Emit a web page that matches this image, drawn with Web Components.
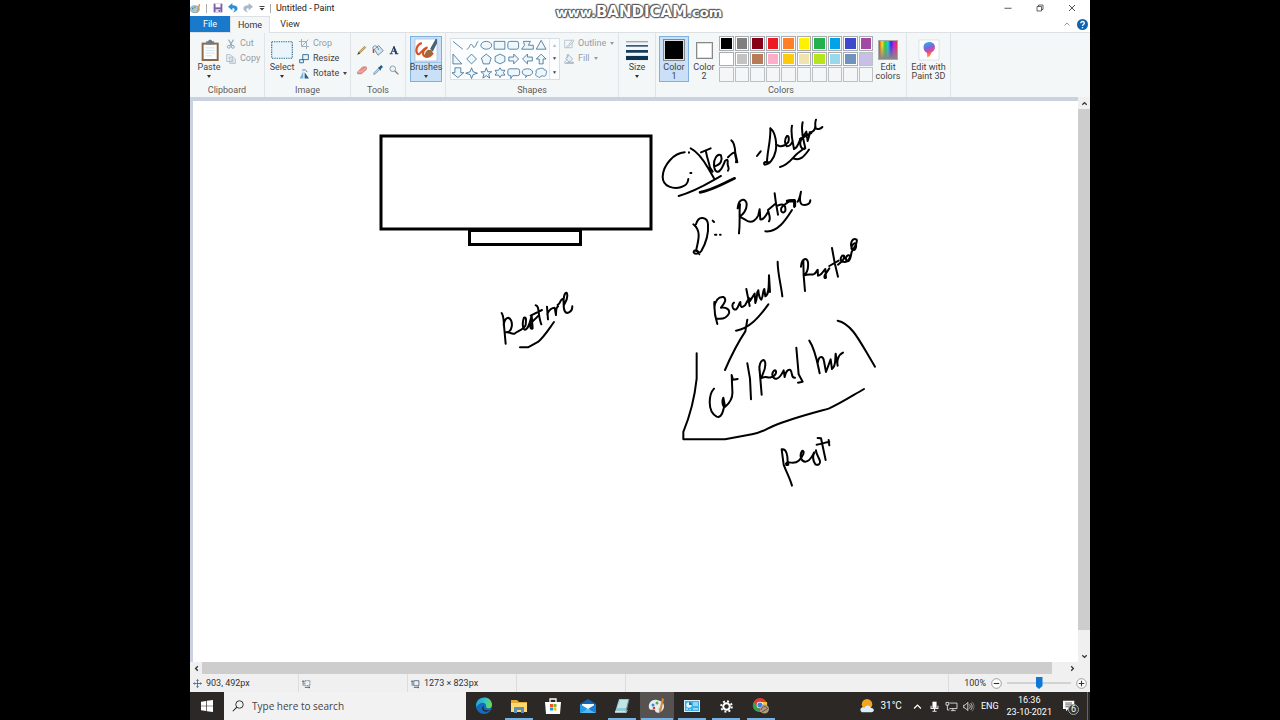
<!DOCTYPE html>
<html lang="en">
<head>
<meta charset="utf-8">
<title>Untitled - Paint</title>
<style>
  body {
    margin: 0;
    background: #000;
    font-family: Roboto, "Open Sans", sans-serif;
    font-size: 9px;
    color: #333;
  }
</style>
</head>
<body>
<desktop-screen>
  <title-bar>Untitled - Paint</title-bar>
  <ribbon-tabs></ribbon-tabs>
  <ribbon-bar></ribbon-bar>
  <work-area></work-area>
  <status-bar></status-bar>
  <task-bar></task-bar>
</desktop-screen>

<script>
const icons = {
  paint: `<ellipse cx="7" cy="9" rx="6.5" ry="5" fill="#a9cbdc" stroke="#6d94a8"/><circle cx="4" cy="8" r="1.3" fill="#3f8fd0"/><circle cx="7" cy="6.5" r="1.2" fill="#4cae4f"/><circle cx="5" cy="11" r="1.2" fill="#e0b53a"/><path d="M9 14L13 1l2 1-4 12z" fill="#d8964c"/>`,
  save: `<path d="M1 1h14v14H1z" fill="#7a5fa8"/><path d="M4 1h8v6H4z" fill="#fff"/><path d="M4 10h8v5H4z" fill="#e6e0f0"/><path d="M9 11h2v3H9z" fill="#5c4590"/>`,
  undo: `<path d="M7 0L0 6l7 6V8.500c4-.5 5 3 1 6.500 10-2 10-12-1-11.500z" fill="#2f8fd6"/>`,
  redo: `<path d="M9 0l7 6-7 6V8.500c-4-.5-5 3-1 6.500C-2 13-2 3 9 3.500z" fill="#a9b9c9"/>`,
  custom: `<path d="M3 4h10v1.800H3zM3 8h10l-5 5z" fill="#444"/>`,
  min: `<path d="M1 8.500h14" stroke="#333" stroke-width="1.600"/>`,
  restore: `<path d="M2 5h9v9H2zM5 5V2h9v9h-3" fill="none" stroke="#333" stroke-width="1.500"/>`,
  close: `<path d="M2 2l12 12M14 2L2 14" stroke="#333" stroke-width="1.700"/>`,
  up: `<path d="M3 11l5-5 5 5" fill="none" stroke="currentColor" stroke-width="1.800"/>`,
  scrollup: `<path d="M3 11l5-5 5 5" fill="none" stroke="currentColor" stroke-width="3"/>`,
  down: `<path d="M3 5l5 5 5-5" fill="none" stroke="currentColor" stroke-width="3"/>`,
  left: `<path d="M11 3L6 8l5 5" fill="none" stroke="currentColor" stroke-width="3"/>`,
  right: `<path d="M5 3l5 5-5 5" fill="none" stroke="currentColor" stroke-width="3"/>`,
  help: `<circle cx="8" cy="8" r="8" fill="#0f63b0"/><path d="M5.500 6.200C5.500 2.500 11 3 10.600 6.300 10.300 8 8 8 8 10.200M8 11.500v2" fill="none" stroke="#fff" stroke-width="1.900"/>`,
  paste: `<path d="M2 2h13v14H2z" fill="#8c6847"/><path d="M3.500 3.500h10v11h-10z" fill="#fbfdff"/><path d="M5 6h7M5 8h7M5 10h7M5 12h5" stroke="#cfdbe4" stroke-width=".6"/><path d="M5.500 1H7C7.500-.5 9.500-.5 10 1h1.500v2.500h-6z" fill="#737c83"/>`,
  cut: `<path d="M4 1l6 10M12 1L6 11" stroke="#91a6ba" stroke-width="1.700"/><circle cx="4.500" cy="12.500" r="2.300" fill="none" stroke="#91a6ba" stroke-width="1.600"/><circle cx="11" cy="12.500" r="2.300" fill="none" stroke="#91a6ba" stroke-width="1.600"/>`,
  copy: `<path d="M1 1h6l3 3v8H1zM6 5h6l3 3v7H6z" fill="#eef3f7" stroke="#a3b2c4" stroke-width="1.200"/><path d="M8 9h5M8 11h5M8 13h5M3 5h3M3 7h3" stroke="#b6c2d0"/>`,
  select: `<rect x=".5" y="2" width="15" height="12" fill="#e9f5fa" stroke="#2d6a90" stroke-width=".8" stroke-dasharray="1 .7"/>`,
  crop: `<path d="M4 0v12h12M0 4h12v12M5 11L15 1" fill="none" stroke="#9fb1c1" stroke-width="1.600"/>`,
  resize: `<path d="M6 1h9v8H6zM1 9h6v5H1z" fill="#eaf5fb" stroke="#26618a" stroke-width="1.400"/>`,
  rotate: `<path d="M7 3v12H1z" fill="#7ab4dc"/><path d="M9 5l7 10H9z" fill="#1e5f92"/><path d="M5 2c4-2 7 0 8 3" fill="none" stroke="#356f98" stroke-width="1.300"/>`,
  pencil: `<path d="M1 15l2-4L12 2l2 2-9 9z" fill="#e4b558" stroke="#86683b"/><path d="M1 15l2-4 2 2z" fill="#333"/>`,
  bucket: `<path d="M3 7l6-5 6 7-7 6z" fill="#d5e7f2" stroke="#52748c"/><path d="M1 6c0-5 6-5 8 2" fill="none" stroke="#42708f"/><path d="M1 6c2 0 2 2 2 6H1z" fill="#d13c2c"/>`,
  text: `<path d="M1 14h5M9.500 14H15M3 14L8 2l5 12M5 10h6" fill="none" stroke="#1e3a5c" stroke-width="1.500"/><path d="M8 2l5 12h-3L7 5z" fill="#1e3a5c"/>`,
  eraser: `<path d="M1 11L9 3h6v4l-8 7H1z" fill="#e88d88" stroke="#bd605d"/><path d="M1 11h6l8-7" fill="none" stroke="#fbd3cf"/>`,
  picker: `<path d="M1 15l1-3 7-7 2 2-7 7z" fill="#bcd9ea" stroke="#4d7691"/><path d="M8 4l2-1 3-3 3 3-3 3-1 3z" fill="#245c8a"/>`,
  zoom: `<circle cx="6" cy="6" r="4.500" fill="#eaf4fa" stroke="#87919a" stroke-width="1.400"/><path d="M9.500 9.500L15 15" stroke="#8d765f" stroke-width="2"/>`,
  brush: `<path d="M0 0h16v16H0z" fill="#fff" stroke="#a9bccb" stroke-width=".5"/><path d="M5 3C1 4 0 9 2 11c2 1 3-4 7-5-4 3-4 6-1 7 2 0 4-1 5-3" fill="none" stroke="#dc4d22" stroke-width="1.500"/><path d="M11 7l4-7h1v3l-3 6z" fill="#46637a"/><path d="M7 13c0-4 2-6 5-5 2 2 0 5-5 5z" fill="#9a6b39"/>`,
  outline: `<path d="M1 2h12v12H1z" fill="none" stroke="#b1bdcb" stroke-width="1.300"/><path d="M4 13L14 1l2 2L6 14z" fill="#eef2f6" stroke="#98a8b8"/>`,
  fill: `<path d="M3 7l5-5 6 6-6 5z" fill="#e8eff5" stroke="#98a8b8" stroke-width="1.200"/><path d="M5 7V1h3M1 15c0-5 3-3 3-7M6 13h9v2H2z" fill="#bac6d6" stroke="#98a8b8"/>`,
  size: `<path d="M0 2h16" stroke="#8797a6" stroke-width=".8"/><path d="M0 5h16" stroke="#35556f" stroke-width="1.200"/><path d="M0 9h16" stroke="#173c59" stroke-width="2"/><path d="M0 13.800h16" stroke="#0d3353" stroke-width="3"/>`,
  paint3d: `<defs><linearGradient id="g" x2=".3" y2="1"><stop stop-color="#20bdf0"/><stop offset=".45" stop-color="#7967d8"/><stop offset=".7" stop-color="#e9449a"/><stop offset="1" stop-color="#f79b28"/></linearGradient></defs><path d="M0 0h16v16H0z" fill="#fff" stroke="#c3cbd1" stroke-width=".4"/><path d="M8 1.500c-6 0-5 7-2 8.500 1.200 1 0 3 1 4 1-1 2-1 3-4 4-2 4-8.500-2-8.500z" fill="url(#g)"/>`,
  move: `<path d="M8 1v14M1 8h14M6 3l2-2 2 2M6 13l2 2 2-2M3 6L1 8l2 2M13 6l2 2-2 2" fill="none" stroke="#31506a" stroke-width="1.300"/>`,
  selsize: `<path d="M2 12V3M.500 5L2 3l1.500 2M5 15h9M12 13.500l2 1.500-2 1" fill="none" stroke="#31506a" stroke-width="1.300"/><path d="M5 3h9v9H5z" fill="none" stroke="#31506a" stroke-width="1.300" stroke-dasharray="2 1"/>`,
  imgsize: `<path d="M2 12V3M.500 5L2 3l1.500 2M5 15h9M12 13.500l2 1.500-2 1M5 3h9v9H5z" fill="none" stroke="#31506a" stroke-width="1.300"/>`,
  minus: `<circle cx="8" cy="8" r="7" fill="#fff" stroke="#777"/><path d="M4 8h8" stroke="#333" stroke-width="1.600"/>`,
  plus: `<circle cx="8" cy="8" r="7" fill="#fff" stroke="#777"/><path d="M4 8h8M8 4v8" stroke="#333" stroke-width="1.600"/>`,
  windows: `<path d="M0 2.200L6.800 1.200v6.300H0zM7.700 1.100L16 0v7.500H7.700zM0 8.400h6.800v6.400L0 13.800zM7.700 8.400H16V16l-8.300-1.100z" fill="#fff"/>`,
  search: `<circle cx="10" cy="6" r="5" fill="none" stroke="#222" stroke-width="1.200"/><path d="M6.500 9.500L1 15" stroke="#222" stroke-width="1.400"/>`,
  edge: `<defs><linearGradient id="e" x2="1" y2=".3"><stop stop-color="#2095df"/><stop offset=".6" stop-color="#36c5c5"/><stop offset="1" stop-color="#66d85a"/></linearGradient></defs><circle cx="8" cy="8" r="8" fill="#126bbd"/><path d="M0 8C0-3 16-3 16 7c0 4-5 4-6 2 1-4-4-6-8-2-1 1-2 3-2 1z" fill="url(#e)"/><path d="M8 8c-2 3 1 5 6 4-3 3-8 2-8-2 0-1 1-2 2-2z" fill="#2d2a27"/>`,
  folder: `<path d="M0 2h6l2 2h8v10H0z" fill="#e5aa35"/><path d="M0 5h16v9H0z" fill="#ffd86e"/><path d="M3 15V9h10v6h-3v-3H6v3z" fill="#5793bd"/>`,
  store: `<path d="M5 4V1h6v3" fill="none" stroke="#fff" stroke-width="1.300"/><path d="M0 4h16l-1 12H1z" fill="#fff"/><path d="M5 6h3v3H5z" fill="#f15325"/><path d="M8.500 6h3v3h-3z" fill="#78b81c"/><path d="M5 9.500h3v3H5z" fill="#159fe6"/><path d="M8.500 9.500h3v3h-3z" fill="#f8ba12"/>`,
  mail: `<path d="M0 6l8-5 8 5v9H0z" fill="#1164b5"/><path d="M2 6h12v6H2z" fill="#f5fbff"/><path d="M0 6l8 5-8 4z" fill="#279bea"/><path d="M16 6l-8 5 8 4z" fill="#1b80d3"/><path d="M0 15l8-4 8 4z" fill="#51b9f4"/>`,
  notepad: `<path d="M5 1h10l-3 13H1z" fill="#8acbd6"/><path d="M6 2h8l-2 8H3z" fill="#c2e4e8"/><path d="M1 14h11l1-2" stroke="#e8eced" stroke-width="1.500" fill="none"/><path d="M12 14L15 1" stroke="#6b8e96"/>`,
  palette: `<path d="M8 2C2 1-1 6 0 10c2 4 4 0 6 2 0 5 9 3 9-4 0-3-2-5-7-6z" fill="#e4edf2"/><circle cx="4" cy="7" r="1.500" fill="#3889d2"/><circle cx="8" cy="5" r="1.500" fill="#5aab48"/><circle cx="5" cy="10" r="1.300" fill="#d93e32"/><circle cx="11" cy="11" r="1.500" fill="#e2ba3a"/><path d="M10 14l3-14 2 1-3 13z" fill="#d78838"/>`,
  control: `<path d="M0 2h16v12H0z" fill="#d9eef9"/><path d="M1 3h14v10H1z" fill="#42afe4"/><circle cx="5" cy="7" r="2.700" fill="#e5f6fd"/><path d="M5 7V4a3 3 0 013 3z" fill="#1878b5"/><path d="M9 5h5M9 7h5M3 12v-2M6 12v-1M9 11h5" stroke="#eafaff"/>`,
  gear: `<circle cx="8" cy="8" r="4" fill="none" stroke="#fff" stroke-width="2.500"/><circle cx="8" cy="8" r="6.500" fill="none" stroke="#fff" stroke-width="2.400" stroke-dasharray="2.400 2.700"/>`,
  chrome: `<circle cx="7" cy="7" r="7" fill="#e33b2e"/><path d="M1 4l4 5 2 5C1 14-2 8 1 4z" fill="#31a350"/><path d="M8 4h6c1 5-3 9-7 10l3-6z" fill="#f5c731"/><circle cx="7" cy="7" r="3.300" fill="#fff"/><circle cx="7" cy="7" r="2.600" fill="#3d7ee4"/><circle cx="11.500" cy="11" r="4.500" fill="#b19b80"/><path d="M8 12c2-5 5-4 7-1M9 14l5-3" stroke="#66503e" fill="none"/>`,
  weather: `<circle cx="8" cy="6" r="6" fill="#f5a51d"/><path d="M2 15c-4-4 1-7 3-5 2-4 7-3 7 0 5 0 5 5 1 5z" fill="#d9edfb"/>`,
  mic: `<path d="M5 1h6v9H5z" fill="#fff"/><path d="M3 7v4h10V7M8 11v4M5 15h6" fill="none" stroke="#eee" stroke-width="1.500"/>`,
  network: `<path d="M5 3h11v8H5M10 11v3M7 14h7" fill="none" stroke="#eee" stroke-width="1.200"/><path d="M0 2h4v4H0zM2 6v7h3" fill="none" stroke="#eee" stroke-width="1.200"/>`,
  sound: `<path d="M1 6h2l4-4v12l-4-4H1z" fill="none" stroke="#eee" stroke-width="1.200"/><path d="M9 5c2 2 2 4 0 6M11 3c3 3 3 7 0 10" fill="none" stroke="#eee" stroke-width="1.200"/><path d="M13 1c4 4 4 10 0 14" fill="none" stroke="#999"/>`,
  chat: `<path d="M0 1h15v11H7l-3 3v-3H0z" fill="#fff"/><path d="M3 4h9M3 6.500h9M3 9h6" stroke="#333"/>`
};

// draws one of the icons above, sized with --size
class PaintIcon extends HTMLElement {
  constructor() {
    super();
    this.attachShadow({ mode: "open" });
  }

  connectedCallback() {
    this.shadowRoot.innerHTML = `
      <style>
        :host { display: inline-block; flex: none; width: var(--size, 10px); height: var(--size, 10px); }
        svg { display: block; width: 100%; height: 100%; overflow: visible; }
      </style>
      <svg viewBox="0 0 16 16" aria-hidden="true">${icons[this.getAttribute("name")]}</svg>`;
  }
}

function define(name, html) {
  const template = document.createElement("template");
  template.innerHTML = html;
  window.customElements.define(name, class extends HTMLElement {
    constructor() {
      super();
      this.attachShadow({ mode: "open" });
      this.shadowRoot.appendChild(template.content.cloneNode(true));
    }
  });
}

const reset = `
  * { box-sizing: border-box; }
  button { font: inherit; color: inherit; border: none; background: none; padding: 0; margin: 0; }
`;

window.customElements.define("paint-icon", PaintIcon);

define("desktop-screen", `
  <style>
    :host { display: flex; flex-direction: column; position: relative; width: min(100vw, 125vh); height: 100vh; margin: 0 auto; background: #fff; overflow: hidden; }
    .watermark { position: absolute; top: 2px; left: 0; right: 2px; text-align: center; font: bold 15px/20px "DejaVu Sans", sans-serif; color: #fff; pointer-events: none;
      text-shadow: 1px 0 1px #555, -1px 0 1px #555, 0 1px 1px #555, 0 -1px 1px #555, 1px 1px 1px #777, -1px -1px 1px #777; }
    .small { font-size: 13px; }
  </style>
  <slot></slot>
  <div class="watermark"><span class="small">www.</span>BANDICAM<span class="small">.com</span></div>
`);

define("title-bar", `
  <style>
    ${reset}
    :host { display: flex; align-items: center; height: 16px; flex: none; color: #222; background: #fff; }
    .quick { display: flex; align-items: center; gap: 5px; padding-right: 4px; }
    .quick button { display: flex; }
    .line { width: 1px; height: 9px; background: #aaa; margin-right: 1px; }
    h1 { flex: 1; margin: 0 0 0 4px; font-size: 9px; line-height: 16px; font-weight: normal; }
    .controls { display: flex; padding-right: 2px; }
    .controls button { display: grid; place-items: center; width: 32px; height: 14px; --size: 8px; }
  </style>
  <div class="quick">
    <paint-icon name="paint" style="--size: 11px"></paint-icon><span class="line"></span>
    <button aria-label="Save"><paint-icon name="save"></paint-icon></button>
    <button aria-label="Undo"><paint-icon name="undo"></paint-icon></button>
    <button aria-label="Redo"><paint-icon name="redo"></paint-icon></button>
    <button aria-label="Customize"><paint-icon name="custom" style="--size: 8px"></paint-icon></button>
  </div>
  <span class="line"></span>
  <h1><slot></slot></h1>
  <div class="controls">
    <button aria-label="Minimize"><paint-icon name="min"></paint-icon></button>
    <button aria-label="Restore"><paint-icon name="restore"></paint-icon></button>
    <button aria-label="Close"><paint-icon name="close"></paint-icon></button>
  </div>
`);

define("ribbon-tabs", `
  <style>
    ${reset}
    :host { display: flex; box-sizing: border-box; height: 17px; flex: none; background: #fff; align-items: stretch; border-bottom: 1px solid #dde1e4; }
    button { width: 40px; line-height: 16px; }
    .file { background: #1979ca; color: #fff; }
    .on { height: 17px; background: #f4f7f8; border: 1px solid #dde1e4; border-bottom: none; line-height: 15px; }
    .side { display: flex; align-items: center; gap: 6px; margin-left: auto; padding-right: 2px; color: #888; }
    .side button { display: flex; width: auto; }
  </style>
  <button class="file">File</button>
  <button class="on">Home</button>
  <button>View</button>
  <div class="side">
    <button aria-label="Collapse ribbon"><paint-icon name="up" style="--size: 8px"></paint-icon></button>
    <button aria-label="Help"><paint-icon name="help" style="--size: 11px"></paint-icon></button>
  </div>
`);

define("ribbon-group", `
  <style>
    :host { display: flex; flex-direction: column; flex: none; box-sizing: border-box; border-right: 1px solid #e0e4e7; padding-top: 3px; }
    .items { display: flex; flex: 1; align-items: flex-start; }
    .caption { text-align: center; line-height: 11px; height: 12px; color: #5c5c5c; }
  </style>
  <div class="items"><slot></slot></div>
  <div class="caption"><slot name="caption"></slot></div>
`);

// tall button with the picture on top and a one or two line label
define("ribbon-button", `
  <style>
    ${reset}
    :host { display: block; }
    button { display: flex; flex-direction: column; align-items: center; width: 100%; height: 46px; border: 1px solid transparent; }
    :host([active]) button { background: #c9e0f7; border-color: #7eb0e0; }
    .icon { display: flex; align-items: center; justify-content: center; height: 26px; }
    .label { line-height: 9px; text-align: center; white-space: nowrap; }
    .arrow { display: none; width: 0; height: 0; margin-top: 3px; border: 2px solid transparent; border-top: 3px solid #333; border-bottom: none; }
    :host([menu]) .arrow { display: block; }
    :host([split]) .icon { align-self: stretch; border-bottom: 1px solid #9cc3ea; }
  </style>
  <button><span class="icon"><slot name="icon"></slot></span><span class="label"><slot></slot></span><span class="arrow"></span></button>
`);

define("ribbon-item", `
  <style>
    ${reset}
    :host { display: block; }
    button { display: flex; align-items: center; gap: 4px; height: 15px; line-height: 15px; white-space: nowrap; }
    :host([disabled]) { color: #969ca2; }
    .arrow { display: none; width: 0; height: 0; border: 2px solid transparent; border-top: 3px solid currentColor; border-bottom: none; }
    :host([menu]) .arrow { display: block; }
  </style>
  <button><slot name="icon"></slot><slot></slot><span class="arrow"></span></button>
`);

define("shape-gallery", `
  <style>
    ${reset}
    :host { display: flex; height: 42px; background: #fbfdfe; border: 1px solid #d9dfe4; }
    svg { display: block; width: 98px; height: 40px; fill: #edf7fc; stroke: #34678f; stroke-width: .8; }
    .scroll { display: grid; width: 10px; border-left: 1px solid #e2e6ea; }
    .scroll button { font-size: 5px; line-height: 13px; color: #444; }
    .scroll button:first-child { color: #b5bcc3; }
  </style>
  <svg viewBox="0 0 100 40" role="img" aria-label="Shapes">
    <path d="M2 2l10 8" /><path d="M16 10c3 0 3-6 5-5s1 4 3 3 2-6 4-6" fill="none"/>
    <ellipse cx="36" cy="6" rx="5.500" ry="4"/><path d="M44 2h11v8H44z"/><rect x="58" y="2" width="11" height="8" rx="2"/>
    <path d="M72 10l3-4-1-4h7l-2 4 5 0v4z"/><path d="M87 10l5-9 5 9z"/>
    <path d="M2 15l9 10H2zM21 15l5 5-5 5-5-5zM36 15l5 4-2 6h-6l-2-6zM50 15l5 2.500v5L50 25l-5-2.500v-5zM59 18h5v-3l5 5-5 5v-3h-5zM83 18h-5v-3l-5 5 5 5v-3h5zM90 25v-5h-3l5-5 5 5h-3v5z"/>
    <path d="M4 29h6v5h3l-6 5-6-5h3zM21 29l1.500 4L27 34.500 22.500 36 21 40l-1.500-4-4.500-1.500L19.500 33zM36 29l1.500 4h4l-3 2.500 1 4L36 37l-3.500 2.500 1-4-3-2.500h4zM50 29l1.500 2.500H55L53.500 34l1.500 2.500h-3.500L50 39l-1.500-2.500H45l1.500-2.500-1.500-2.500h3.500z"/>
    <path d="M60 30h8q2 0 2 2v3q0 2-2 2h-5l-2 3v-3h-1q-2 0-2-2v-3q0-2 2-2z"/><path d="M77 37c-6-1-6-7 1-7s7 7 0 7l-2 2z"/><path d="M89 38c-3 0-3-3-2-4-1-3 1-4 3-4 2-1 5-1 5 1 3 0 3 3 2 4 0 3-2 3-4 2l-3 2z"/>
  </svg>
  <div class="scroll"><button aria-label="Row up">▲</button><button aria-label="Row down">▼</button><button aria-label="More shapes">▼</button></div>
`);

class ColorSwatches extends HTMLElement {
  constructor() {
    super();
    this.attachShadow({ mode: "open" });
    const colors = ["#000", "#7f7f7f", "#880015", "#ed1c24", "#ff7f27", "#fff200", "#22b14c", "#00a2e8", "#3f48cc", "#a349a4",
      "#fff", "#c3c3c3", "#b97a57", "#ffaec9", "#ffc90e", "#efe4b0", "#b5e61d", "#99d9ea", "#7092be", "#c8bfe7"];
    while (colors.length < 30) colors.push("#f4f7f8");
    this.shadowRoot.innerHTML = `
      <style>
        :host { display: grid; grid-template-columns: repeat(10, 1fr); grid-template-rows: repeat(3, 1fr); gap: 1px; width: 154px; height: 46px; }
        button { padding: 0; border: 1px solid #a9adb0; box-shadow: inset 0 0 0 1px #fff; }
        button:nth-child(n+21) { box-shadow: none; border-color: #bcc1c4; }
      </style>
      ${colors.map(c => `<button style="background: ${c}" aria-label="${c}"></button>`).join("")}`;
  }
}
window.customElements.define("color-swatches", ColorSwatches);

define("ribbon-bar", `
  <style>
    ${reset}
    :host { display: flex; height: 64px; flex: none; background: #f4f7f8; color: #444; }
    .clipboard { width: 75px; }
    .image { width: 86px; }
    .tools { width: 55px; }
    .brushes { width: 40px; }
    .shapes { width: 173px; }
    .size { width: 37px; }
    .colors { width: 251px; }
    .threed { width: 44px; }
    .clipboard ribbon-button { width: 34px; margin-left: 2px; }
    .image ribbon-button { width: 34px; }
    .brushes ribbon-button { width: 32px; margin-left: 4px; }
    .size ribbon-button, .threed ribbon-button { width: 100%; }
    .shapes shape-gallery { margin: 2px 4px 0; }
    .colors ribbon-button { width: 30px; }
    .colors ribbon-button:first-child { margin-left: 3px; }
    .tool-grid { display: grid; grid-template-columns: repeat(3, 16px); grid-auto-rows: 20px; padding: 4px 0 0 3px; }
    .tool-grid button { display: grid; place-items: center; }
    .chip { width: 22px; height: 22px; background: #000; border: 1px solid #888; box-shadow: inset 0 0 0 1px #ddd; }
    .chip.two { width: 17px; height: 17px; background: #fff; }
    .rainbow { width: 20px; height: 20px; border: 1px solid #aaa; background: linear-gradient(transparent 20%, #888), linear-gradient(90deg, #e92d23, #f6e51c, #23cf3d, #24c9e8, #3028e8, #d623d7, #e92d43); }
  </style>
  <ribbon-group class="clipboard">
    <ribbon-button menu><paint-icon slot="icon" name="paste" style="--size: 21px"></paint-icon>Paste</ribbon-button>
    <div>
      <ribbon-item disabled><paint-icon slot="icon" name="cut"></paint-icon>Cut</ribbon-item>
      <ribbon-item disabled><paint-icon slot="icon" name="copy"></paint-icon>Copy</ribbon-item>
    </div>
    <span slot="caption">Clipboard</span>
  </ribbon-group>
  <ribbon-group class="image">
    <ribbon-button menu><paint-icon slot="icon" name="select" style="--size: 22px"></paint-icon>Select</ribbon-button>
    <div>
      <ribbon-item disabled><paint-icon slot="icon" name="crop"></paint-icon>Crop</ribbon-item>
      <ribbon-item><paint-icon slot="icon" name="resize"></paint-icon>Resize</ribbon-item>
      <ribbon-item menu><paint-icon slot="icon" name="rotate"></paint-icon>Rotate</ribbon-item>
    </div>
    <span slot="caption">Image</span>
  </ribbon-group>
  <ribbon-group class="tools">
    <div class="tool-grid">
      <button aria-label="Pencil"><paint-icon name="pencil"></paint-icon></button>
      <button aria-label="Fill with color"><paint-icon name="bucket" style="--size: 12px"></paint-icon></button>
      <button aria-label="Text"><paint-icon name="text"></paint-icon></button>
      <button aria-label="Eraser"><paint-icon name="eraser"></paint-icon></button>
      <button aria-label="Color picker"><paint-icon name="picker"></paint-icon></button>
      <button aria-label="Magnifier"><paint-icon name="zoom"></paint-icon></button>
    </div>
    <span slot="caption">Tools</span>
  </ribbon-group>
  <ribbon-group class="brushes">
    <ribbon-button active menu split><paint-icon slot="icon" name="brush" style="--size: 22px"></paint-icon>Brushes</ribbon-button>
  </ribbon-group>
  <ribbon-group class="shapes">
    <shape-gallery></shape-gallery>
    <div>
      <ribbon-item disabled menu><paint-icon slot="icon" name="outline"></paint-icon>Outline</ribbon-item>
      <ribbon-item disabled menu><paint-icon slot="icon" name="fill"></paint-icon>Fill</ribbon-item>
    </div>
    <span slot="caption">Shapes</span>
  </ribbon-group>
  <ribbon-group class="size">
    <ribbon-button menu><paint-icon slot="icon" name="size" style="--size: 22px"></paint-icon>Size</ribbon-button>
  </ribbon-group>
  <ribbon-group class="colors">
    <ribbon-button active><span slot="icon" class="chip"></span>Color<br>1</ribbon-button>
    <ribbon-button><span slot="icon" class="chip two"></span>Color<br>2</ribbon-button>
    <color-swatches></color-swatches>
    <ribbon-button><span slot="icon" class="rainbow"></span>Edit<br>colors</ribbon-button>
    <span slot="caption">Colors</span>
  </ribbon-group>
  <ribbon-group class="threed">
    <ribbon-button><paint-icon slot="icon" name="paint3d" style="--size: 20px"></paint-icon>Edit with<br>Paint 3D</ribbon-button>
  </ribbon-group>
`);

define("scroll-bar", `
  <style>
    ${reset}
    :host { display: flex; background: #f0f0f0; color: #333; flex: none; height: 12px; --size: 7px; }
    :host([vertical]) { flex-direction: column; width: 12px; height: auto; }
    button { width: 12px; height: 12px; display: grid; place-items: center; flex: none; }
    .track { display: flex; flex: 1; padding-right: 14px; }
    .thumb { flex: 1; background: #cdcdcd; }
    :host([vertical]) .track { padding: 0 0 20px; }
  </style>
  <button aria-label="Scroll back"><slot name="back"></slot></button>
  <div class="track"><div class="thumb"></div></div>
  <button aria-label="Scroll forward"><slot name="forward"></slot></button>
`);

define("paint-canvas", `
  <style>
    :host { display: block; background: #fff; overflow: hidden; }
    svg { display: block; fill: none; stroke: #000; stroke-width: 6; stroke-linecap: round; stroke-linejoin: round; }
  </style>
  <svg width="885" height="561" viewBox="0 0 885 561" role="img" aria-label="Drawing">
    <g stroke-width="3" stroke-linejoin="miter">
      <path d="M188 35h270v93H188z"/>
      <path d="M276.500 129.500h111v14h-111z"/>
    </g>
    <g transform="translate(177 24) scale(.3333)">
      <path d="M395 564c8 12 5 24 8 48l4 44M401 600c4-24 16-26 22-14 5 10 3 28-6 34l-8 2M409 622c10-2 17 8 26 3 8-6 28-13 32-25 1-15 3-24-5-22-6 14-4 34 2 36 12 0 16-24 21-42l3 38c-6 4-8-4-6-12 4-12 14-14 22-25M497 541c12 0 6 30 17 57M482 572l34-17M531 545l3 38M532 568c4-14 15-20 22-20l4 22c0-12 2-24 6-26M563 540c10-5 9-20 15-18 2 2 4 8 4 18 5-10 15-23 8-37-7-1-10 16-9 35 0 20 5 30 16 24 8-3 10-10 10-18"/>
      <path d="M450 667h24l30-16c18-15 32-38 48-60"/>
    </g>
    <g transform="translate(457 4) scale(.3333)">
      <path d="M104 142c-32 2-64 37-66 73 0 31 34 38 56 31 11-3 20-12 21-24M117 142v1M121 204h3M122 130c25 12 42 41 54 62l16 28M153 142l29-12M168 140c2 14 8 30 12 48l8 12M193 184c20-4 25-19 20-33-11-8-23 13-21 30 2 21 12 23 18 15 7-7 11-18 15-28 8-7 9-3 8 8 0 10 7 14 1 21M234 157c6-6 18-18 22-13-3 10 6 14 2 28M244 106c6 4 11 20 12 38l6 28"/>
      <path d="M86 273c52-14 86-37 127-60"/>
      <path d="M150 262c37-7 64-24 104-42" stroke-width="8"/>
      <path d="M321 153l11-14M361 70c2 35-10 72-10 103M361 70c16 10 20 48 16 68-5 23-18 41-33 41-5-5 1-12 12-7M378 119l10 4c13 3 20-4 27-12 3-12 1-20-4-18-8 10-8 26 0 31 10 0 14-8 17-16M426 62c-5 22 2 46 6 70 12-4 14-20 20-32M458 52c-7 28 3 52 8 78-10 8-18-10-14-22 5-12 13-20 17-28l4 28 7-24M450 102l34-18M498 44c-4 10-2 20-1 26 5 4 15 2 20-4M479 82c10-1 17-8 17-20"/>
      <path d="M390 186c28-6 39-31 54-42l20-15M430 160c23 10 35-10 47-26"/>
      <path d="M130 358c26 20 14 50 8 80M138 358c8-30 34-20 36-1 2 25-2 50-20 81-5 8-20 11-23 4 0-8 12-10 17 6M188 347l4 4M199 389h-4M210 389h2"/>
      <path d="M270 298c-3 30 1 53-3 87M263 310c3-34 27-30 27-12 1 18-13 32-21 37l18 10c20 14 32-2 38-14l4-18 2 30c10 4 18-14 24-24 3 14 8 20 2 30M354 315l24-20M374 265l4 30 6 34M383 302c18-8 25-1 23 15-6 11-15 4-12-8 8-15 20-12 24-23l16-1-1 21M443 290c6-8 8-20 10-30-3 14-6 32 2 38 12 5 26 0 26-12"/>
      <path d="M412 288h22v14" stroke-width="9"/>
      <path d="M346 379c38 4 63-37 80-64"/>
    </g>
    <g transform="translate(477 129) scale(.3333)">
      <path d="M133 216c-1 25 2 45 9 66M133 235c1-22 13-36 27-34 13 7 1 22-7 32 17-2 27 6 24 17-7 15-20 18-35 16M192 218c-8 4-5 25 7 20 7-7 7-17 12-22 0 18 5 18 14 10 4-6 6-14 14-21M229 177l10 51M240 213l14-22 2 28c8-15 2-31 9-38 1 14 2 22 9 28 7-12 3-25 9-32l3 22c13-8 10-34 11-63l3 50M323 95c0 36 11 74 14 104"/>
      <path d="M198 302c39-7 66-36 97-79M232 269l-6 35c-22 33-43 74-61 116"/>
      <path d="M400 90l1 46 4 47M393 110c2-27 19-28 21-13 2 20-5 34-13 40 16-7 20-2 30-4 8-2 10-14 12-14l1 18c10 0 14-12 22-20l2 26c-6 4-6-4-2-10l12-18M486 54l8 44 10 42M478 108l28-16M504 104c14-11 21-18 18-27-9-2-14 13-5 18 13 5 22-7 24-17-12-8-18 12-8 16 10-2 9-18 12-28 7-16 19-24 15-37-13-7-20 10-15 24 7 15 15 3 13-10-3-10-16 6-13 14"/>
      <path d="M503 272c45 9 70 70 112 138"/>
    </g>
    <g transform="translate(477 209) scale(.3333)">
      <path d="M80 130v76c-7 66-24 121-40 160v22h125l81-15c32-6 42-16 64-25 52-22 111-37 166-52 36-16 66-36 106-59"/>
      <path d="M132 236c-14 15-23 66 8 84 16 6 20-20 24-37l-4-20c-5 12-2 32 7 26 16-14 22-30 20-48l-2-46 4 14 14-2M232 160l8 46 3 62M268 170l7 84M268 180c0-34 19-38 18-16 0 20-12 32-11 40 17-9 15 2 28-2 19-5 18-25 9-20-10 9-3 26 7 24 11-1 19-19 22-25l3 20c2-15 10-24 17-21 9 9 0 24 14 23M379 113l7 80 12 22-14 3M418 92c18 27 24 64 31 98M443 160c4-27 17-21 19-7l6 33 14-38 4 29c13-8 9-33 11-46l6 36c-3-13 1-32 16-39"/>
      <path d="M335 418l6 46c7 20 18 39 25 63M335 418c15-3 18 20 18 38l2 8c-6 4-10-2-4-6 12-3 22 6 35-6 13-11 20-30 11-30-10 14-4 33 9 33 15 0 20-17 27-28-7 16-3 27 3 36 8 4 16 0 14-10-2-8-12-22-12-32M440 404c16-1 26-8 38-8M443 384l10 1 14 65M476 390l2 16"/>
    </g>
  </svg>
`);

define("work-area", `
  <style>
    :host { display: grid; flex: 1; min-height: 0; grid-template-columns: 1fr 12px; grid-template-rows: 1fr 12px; background: #f0f0f0; }
    .page { display: flex; min-width: 0; min-height: 0; padding: 4px 0 0 3px; background: #c9d2e0; }
    paint-canvas { flex: 1; }
    .across { grid-column: 1; }
  </style>
  <div class="page"><paint-canvas></paint-canvas></div>
  <scroll-bar vertical><paint-icon slot="back" name="scrollup"></paint-icon><paint-icon slot="forward" name="down"></paint-icon></scroll-bar>
  <scroll-bar class="across"><paint-icon slot="back" name="left"></paint-icon><paint-icon slot="forward" name="right"></paint-icon></scroll-bar>
`);

define("status-bar", `
  <style>
    ${reset}
    :host { display: flex; height: 18px; flex: none; background: #f0f0f0; color: #333; line-height: 18px; }
    .cell { display: flex; align-items: center; gap: 4px; width: 109px; padding-left: 3px; border-right: 1px solid #dcdcdc; }
    .cell paint-icon { --size: 9px; }
    .zoom { display: flex; align-items: center; gap: 5px; margin-left: auto; padding: 0 3px 0 15px; border-left: 1px solid #dcdcdc; --size: 11px; }
    .zoom button { display: flex; }
    input { -webkit-appearance: none; appearance: none; width: 64px; height: 12px; margin: 0; background: linear-gradient(#d2d2d2, #d2d2d2) center / 100% 2px no-repeat; }
    input::-webkit-slider-thumb { -webkit-appearance: none; width: 7px; height: 12px; background: #0f78d4; clip-path: polygon(0 0, 100% 0, 100% 75%, 50% 100%, 0 75%); }
  </style>
  <div class="cell"><paint-icon name="move"></paint-icon>903, 492px</div>
  <div class="cell"><paint-icon name="selsize"></paint-icon></div>
  <div class="cell"><paint-icon name="imgsize"></paint-icon>1273 × 823px</div>
  <div class="cell"></div>
  <div class="zoom">
    <label for="zoom">100%</label>
    <button aria-label="Zoom out"><paint-icon name="minus"></paint-icon></button>
    <input id="zoom" type="range" min="0" max="100" value="50">
    <button aria-label="Zoom in"><paint-icon name="plus"></paint-icon></button>
  </div>
`);

define("task-bar", `
  <style>
    ${reset}
    :host { display: flex; height: 28px; flex: none; background: #2b2825; color: #fff; }
    button { display: grid; place-items: center; }
    .start { width: 34px; --size: 12px; }
    .search { display: flex; align-items: center; gap: 8px; width: 242px; padding-left: 8px; background: #f2f2f2; --size: 12px; }
    .search input { flex: 1; min-width: 0; padding: 0; border: none; outline: none; background: none; font: 10px "Open Sans", sans-serif; }
    .search input::placeholder { color: #444; opacity: 1; }
    .apps { display: grid; grid-template-columns: repeat(9, 1fr); width: 311px; margin-left: 1px; --size: 16px; }
    .apps button { border-bottom: 2px solid transparent; border-top: 2px solid transparent; }
    .apps .open { background: linear-gradient(#76b3e4, #76b3e4) bottom / 28px 2px no-repeat border-box; }
    .apps .current { background: linear-gradient(#76b3e4, #76b3e4) bottom / 32px 2px no-repeat border-box, #55524f; }
    .tray { display: flex; align-items: center; margin-left: auto; line-height: 12px; }
    .tray button { margin-right: 6px; --size: 11px; }
    .weather { display: flex; align-items: center; gap: 6px; margin-right: 10px; font-size: 10px; --size: 14px; }
    .tray .lang { margin: 0 8px 0 1px; }
    .clock { text-align: center; margin-right: 11px; }
    .tray .notes { position: relative; margin-right: 12px; --size: 12px; }
    .count { position: absolute; left: 5px; top: 4px; width: 11px; height: 11px; border: 1px solid #aaa; border-radius: 50%; background: #333; line-height: 9px; text-align: center; }
    .peek { align-self: stretch; width: 3px; border-left: 1px solid #666; }
  </style>
  <button class="start" aria-label="Start"><paint-icon name="windows"></paint-icon></button>
  <label class="search"><paint-icon name="search"></paint-icon><input type="text" placeholder="Type here to search" aria-label="Search"></label>
  <div class="apps">
    <button aria-label="Edge"><paint-icon name="edge"></paint-icon></button>
    <button class="open" aria-label="File Explorer"><paint-icon name="folder"></paint-icon></button>
    <button aria-label="Store"><paint-icon name="store"></paint-icon></button>
    <button aria-label="Mail"><paint-icon name="mail"></paint-icon></button>
    <button class="open" aria-label="Notepad"><paint-icon name="notepad"></paint-icon></button>
    <button class="current" aria-label="Paint"><paint-icon name="palette"></paint-icon></button>
    <button class="open" aria-label="Control Panel"><paint-icon name="control"></paint-icon></button>
    <button class="open" aria-label="Settings"><paint-icon name="gear" style="--size: 13px"></paint-icon></button>
    <button class="open" aria-label="Chrome"><paint-icon name="chrome"></paint-icon></button>
  </div>
  <div class="tray">
    <span class="weather"><paint-icon name="weather"></paint-icon>31°C</span>
    <button aria-label="Hidden icons"><paint-icon name="up"></paint-icon></button>
    <button aria-label="Microphone"><paint-icon name="mic"></paint-icon></button>
    <button aria-label="Network"><paint-icon name="network"></paint-icon></button>
    <button aria-label="Volume"><paint-icon name="sound"></paint-icon></button>
    <button class="lang">ENG</button>
    <div class="clock">16:36<br>23-10-2021</div>
    <button class="notes" aria-label="Notifications"><paint-icon name="chat"></paint-icon><span class="count">6</span></button>
    <span class="peek"></span>
  </div>
`);
</script>
</body>
</html>
